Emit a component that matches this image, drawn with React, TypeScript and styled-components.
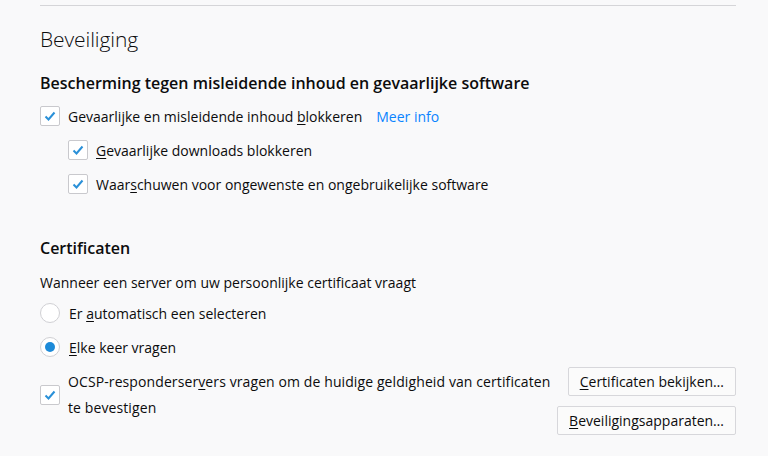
import React from "react";
import styled, { createGlobalStyle } from "styled-components";

const Global = createGlobalStyle`
  html, body { margin: 0; padding: 0; background: #f9f9fa; }
  body { font-family: "Open Sans", "Noto Sans", sans-serif; color: #0c0c0d; }
`;

const Page = styled.div`
  width: 768px;
  height: 456px;
  overflow: hidden;
  box-sizing: border-box;
  padding: 5px 32px 0 40px;
`;

const Separator = styled.div`
  height: 1px;
  background: #d5d5d8;
`;

const Title = styled.h1`
  margin: 18px 0 0;
  font-size: 21px;
  font-weight: 300;
  line-height: 30px;
  letter-spacing: -0.1px;
`;

const GroupTitle = styled.h2<{ $top: number }>`
  margin: ${(p) => p.$top}px 0 0;
  font-size: 16px;
  font-weight: 600;
  line-height: 24px;
`;

const Description = styled.p`
  margin: 12px 0 0;
  font-size: 14px;
  line-height: 22px;
`;

const Row = styled.label<{ $indent?: boolean; $top?: number }>`
  display: flex;
  align-items: center;
  height: 34px;
  margin-top: ${(p) => p.$top ?? 0}px;
  padding-left: ${(p) => (p.$indent ? 28 : 0)}px;
  font-size: 14px;
`;

const Box = styled.span`
  flex: none;
  width: 20px;
  height: 20px;
  box-sizing: border-box;
  border: 1px solid #c9c9cd;
  border-radius: 2px;
  background: #ffffff;
  display: flex;
  align-items: center;
  justify-content: center;
  margin-right: 8px;
`;

const Radio = styled.span<{ $on?: boolean }>`
  flex: none;
  width: 20px;
  height: 20px;
  box-sizing: border-box;
  border: 1px solid #d0d0d4;
  border-radius: 50%;
  background: #ffffff;
  display: flex;
  align-items: center;
  justify-content: center;
  margin-right: 9px;
  &::after {
    content: "";
    width: 10px;
    height: 10px;
    border-radius: 50%;
    background: ${(p) => (p.$on ? "#1d8ad8" : "transparent")};
  }
`;

const Link = styled.a`
  margin-left: 14px;
  color: #0a84ff;
  text-decoration: none;
`;

const Key = styled.span`
  text-decoration: underline;
  text-underline-offset: 2px;
`;

const OcspRow = styled.div`
  display: flex;
  align-items: flex-start;
  justify-content: space-between;
`;

const OcspLabel = styled.label`
  display: flex;
  align-items: center;
  margin-top: 5px;
  font-size: 14px;
  line-height: 26px;
  white-space: nowrap;
  letter-spacing: 0.1px;
`;

const Buttons = styled.div`
  display: flex;
  flex-direction: column;
  align-items: flex-end;
  gap: 10px;
  margin-top: 3px;
`;

const Button = styled.button`
  font-family: inherit;
  font-size: 14px;
  color: #0c0c0d;
  height: 29px;
  padding: 0 11px;
  background: #fbfbfb;
  border: 1px solid #d7d7db;
  border-radius: 2px;
`;

const Check = () => (
  <Box>
    <svg width="14" height="14" viewBox="0 0 14 14">
      <path d="M2.5 7.5 L5.5 10.5 L11.5 3.5" fill="none" stroke="#2a90d8" strokeWidth="2" />
    </svg>
  </Box>
);

export default function App() {
  return (
    <>
      <Global />
      <Page>
        <Separator />
        <Title>Beveiliging</Title>
        <GroupTitle $top={17}>Bescherming tegen misleidende inhoud en gevaarlijke software</GroupTitle>
        <Row $top={4}>
          <Check />
          <span>
            Gevaarlijke en misleidende inhoud <Key>b</Key>lokkeren
          </span>
          <Link href="#">Meer info</Link>
        </Row>
        <Row $indent>
          <Check />
          <span>
            <Key>G</Key>evaarlijke downloads blokkeren
          </span>
        </Row>
        <Row $indent>
          <Check />
          <span>
            Waar<Key>s</Key>chuwen voor ongewenste en ongebruikelijke software
          </span>
        </Row>

        <GroupTitle $top={35}>Certificaten</GroupTitle>
        <Description>Wanneer een server om uw persoonlijke certificaat vraagt</Description>
        <Row $top={2}>
          <Radio />
          <span>
            Er <Key>a</Key>utomatisch een selecteren
          </span>
        </Row>
        <Row>
          <Radio $on />
          <span>
            <Key>E</Key>lke keer vragen
          </span>
        </Row>
        <OcspRow>
          <OcspLabel>
            <Check />
            <span>
              OCSP-responderser<Key>v</Key>ers vragen om de huidige geldigheid van certificaten
              <br />
              te bevestigen
            </span>
          </OcspLabel>
          <Buttons>
            <Button>
              <Key>C</Key>ertificaten bekijken…
            </Button>
            <Button>
              <Key>B</Key>eveiligingsapparaten…
            </Button>
          </Buttons>
        </OcspRow>
      </Page>
    </>
  );
}
